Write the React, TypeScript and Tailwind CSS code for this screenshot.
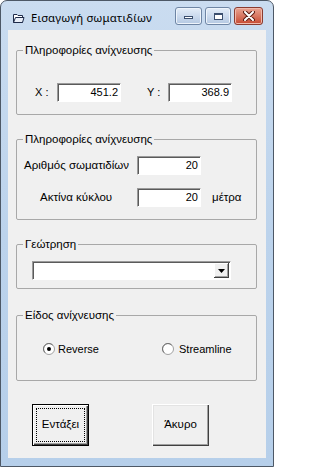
import React from "react";

function Field({ value, className = "" }: { value: string; className?: string }) {
  return (
    <div
      className={`flex h-[19px] items-center justify-end border border-t-[#9a9a9a] border-l-[#9a9a9a] border-r-white border-b-white bg-white pr-[2px] shadow-[inset_1px_1px_0_#5a5a5a] ${className}`}
    >
      {value}
    </div>
  );
}

function Radio({ checked }: { checked?: boolean }) {
  return (
    <svg width="12" height="12" viewBox="0 0 12 12">
      <circle cx="6" cy="6" r="5.5" fill="#fff" stroke="#a0a0a0" />
      <path d="M2 10 A5 5 0 0 1 10 2" fill="none" stroke="#6a6a6a" strokeWidth="1" transform="translate(0.2 0.2) scale(0.95)" />
      {checked && <circle cx="6" cy="6" r="2" fill="#000" />}
    </svg>
  );
}

function Group({ title, className, children }: { title: string; className: string; children?: React.ReactNode }) {
  return (
    <fieldset className={`w-[241px] rounded-[2px] border border-[#a8a8a8] ${className}`}>
      <legend className="ml-[6px] px-[2px] text-[11.5px] leading-[14px]">{title}</legend>
      {children}
    </fieldset>
  );
}

function TitleBar() {
  return (
    <div className="flex h-[29px] items-start">
      <div className="mt-[10px] ml-[11px] flex items-center gap-[6px]">
        <svg width="13" height="12" viewBox="0 0 13 12">
          <path d="M1.5 2.5 H5 L6 3.5 H10.5 V10.5 H1.5 Z" fill="#fff" stroke="#1e2b4a" />
          <path d="M3.5 5.5 H12 L10.5 10.5 H1.5 Z" fill="#e8eef8" stroke="#1e2b4a" />
        </svg>
        <span className="font-['Noto_Sans',sans-serif] text-[11.3px] leading-[14px] tracking-[0.2px]">Εισαγωγή σωματιδίων</span>
      </div>
      <div className="mt-[6px] mr-[10px] ml-auto flex gap-[3px]">
        <div className="flex h-[18px] w-[27px] items-end justify-center rounded-[3px] border border-[#6e85a4] bg-gradient-to-b from-[#e4edf8] to-[#b4c8e2] pb-[5px] shadow-[inset_0_0_0_1px_#eef4fb]">
          <div className="h-[3px] w-[9px] border border-[#3b4f6e] bg-white" />
        </div>
        <div className="flex h-[18px] w-[26px] items-center justify-center rounded-[3px] border border-[#6e85a4] bg-gradient-to-b from-[#e4edf8] to-[#b4c8e2] shadow-[inset_0_0_0_1px_#eef4fb]">
          <div className="h-[7px] w-[9px] border border-[#3b4f6e] bg-white shadow-[inset_0_1px_0_#3b4f6e]" />
        </div>
        <div className="flex h-[18px] w-[29px] items-center justify-center rounded-[3px] border border-[#8a3b30] bg-gradient-to-b from-[#e8a493] to-[#c6472f] shadow-[inset_0_0_0_1px_#f0b9ab]">
          <svg width="12" height="10" viewBox="0 0 12 10">
            <path d="M2 1 L10 9 M10 1 L2 9" stroke="#5a1d14" strokeWidth="4" strokeLinecap="round" />
            <path d="M2 1 L10 9 M10 1 L2 9" stroke="#fff" strokeWidth="2" strokeLinecap="round" />
          </svg>
        </div>
      </div>
    </div>
  );
}

export default function App() {
  return (
    <div className="h-[467px] w-[274px] font-['Liberation_Sans',Arial,sans-serif] text-[11px] text-black">
      <div className="flex h-full flex-col rounded-t-[7px] border border-[#4d5866] bg-gradient-to-b from-[#cadcf0] via-[#bcd3ec] to-[#b6cfea]">
        <TitleBar />
        <div className="mx-[7px] mb-[8px] flex flex-1 flex-col bg-[#f0f0f0] pt-[13px] pl-[8px]">
          <Group title="Πληροφορίες ανίχνευσης" className="h-[72px]">
            <div className="flex items-center pt-[26px] pl-[18px]">
              <span className="w-[22px]">X :</span>
              <Field value="451.2" className="w-[64px]" />
              <span className="ml-[26px] w-[21px]">Y :</span>
              <Field value="368.9" className="w-[64px]" />
            </div>
          </Group>
          <Group title="Πληροφορίες ανίχνευσης" className="mt-[17px] h-[88px]">
            <div className="flex flex-col gap-[13px] pt-[10px] pl-[7px]">
              <div className="flex items-center">
                <span className="w-[113px] text-[11.5px]">Αριθμός σωματιδίων</span>
                <Field value="20" className="w-[64px]" />
              </div>
              <div className="flex items-center">
                <span className="w-[113px] pl-[16px] text-[11.5px]">Ακτίνα κύκλου</span>
                <Field value="20" className="w-[64px]" />
                <span className="ml-[11px] text-[11.5px]">μέτρα</span>
              </div>
            </div>
          </Group>
          <Group title="Γεώτρηση" className="mt-[17px] h-[52px]">
            <div className="pt-[10px] pl-[15px]">
              <div className="flex h-[19px] w-[199px] items-center justify-end border border-t-[#9a9a9a] border-l-[#9a9a9a] border-r-white border-b-white bg-white pr-[1px] shadow-[inset_1px_1px_0_#5a5a5a]">
                <div className="flex h-[15px] w-[15px] items-center justify-center bg-[#f0f0f0] shadow-[inset_-1px_-1px_0_#404040,inset_1px_1px_0_#fff,inset_-2px_-2px_0_#a0a0a0]">
                  <svg width="7" height="4" viewBox="0 0 7 4">
                    <path d="M0 0 H7 L3.5 4 Z" fill="#000" />
                  </svg>
                </div>
              </div>
            </div>
          </Group>
          <Group title="Είδος ανίχνευσης" className="mt-[19px] h-[73px]">
            <div className="flex items-center pt-[19px] pl-[26px]">
              <div className="flex w-[119px] items-center gap-[3px]">
                <Radio checked />
                <span>Reverse</span>
              </div>
              <div className="flex items-center gap-[5px]">
                <Radio />
                <span>Streamline</span>
              </div>
            </div>
          </Group>
          <div className="mt-[23px] flex pl-[16px] text-[11.5px]">
            <button className="flex h-[42px] w-[57px] items-stretch border border-black bg-[#f0f0f0] p-[3px] shadow-[inset_1px_1px_0_#fff,inset_-1px_-1px_0_#404040,inset_-2px_-2px_0_#a0a0a0]">
              <span className="flex flex-1 items-center justify-center border border-dotted border-black">Εντάξει</span>
            </button>
            <button className="ml-[63px] flex h-[42px] w-[57px] items-center justify-center bg-[#f0f0f0] shadow-[inset_1px_1px_0_#fff,inset_-1px_-1px_0_#404040,inset_-2px_-2px_0_#a0a0a0,inset_2px_2px_0_#e3e3e3]">
              Άκυρο
            </button>
          </div>
        </div>
      </div>
    </div>
  );
}
